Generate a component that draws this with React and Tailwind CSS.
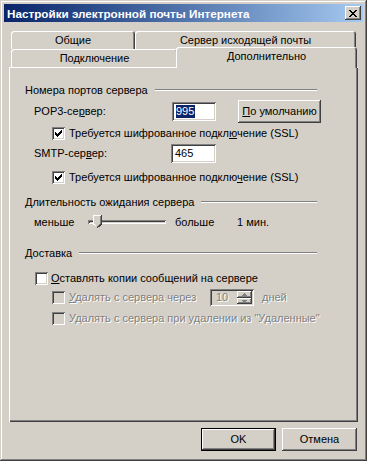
import React from "react";

const raised =
  "shadow-[inset_-1px_-1px_#404040,inset_1px_1px_#ffffff,inset_-2px_-2px_#808080,inset_2px_2px_#d4d0c8]";
const sunken =
  "shadow-[inset_1px_1px_#808080,inset_-1px_-1px_#ffffff,inset_2px_2px_#404040,inset_-2px_-2px_#d4d0c8]";
const dim = "text-[#808080] [text-shadow:1px_1px_0_#ffffff]";

const CheckMark = () => {
  const runs = [2, 3, 4, 3, 2, 1, 0];
  return (
    <svg width="7" height="7" viewBox="0 0 7 7" shapeRendering="crispEdges">
      {runs.map((y, x) => (
        <rect key={x} x={x} y={y} width="1" height="3" fill="#000" />
      ))}
    </svg>
  );
};

const Box = ({ checked, disabled }) => (
  <span
    className={`w-[13px] h-[13px] shrink-0 flex items-center justify-center ${sunken} ${
      disabled ? "bg-[#d4d0c8]" : "bg-white"
    }`}
  >
    {checked && <CheckMark />}
  </span>
);

const GroupTitle = ({ children, className = "" }) => (
  <div className={`h-[14px] w-[292px] flex items-center ${className}`}>
    <span className="whitespace-nowrap">{children}</span>
    <span className="flex-1 ml-[7px] h-[2px] border-t border-[#808080] border-b border-b-white" />
  </div>
);

const CloseGlyph = () => {
  const rows = [
    [0, 6],
    [1, 5],
    [2, 4],
    [3, 3],
    [2, 4],
    [1, 5],
    [0, 6],
  ];
  return (
    <svg width="8" height="7" viewBox="0 0 8 7" shapeRendering="crispEdges">
      {rows.map(([a, b], y) => (
        <g key={y}>
          <rect x={a} y={y} width="2" height="1" fill="#000" />
          <rect x={b} y={y} width="2" height="1" fill="#000" />
        </g>
      ))}
    </svg>
  );
};

const SpinArrow = ({ up }) => (
  <svg width="5" height="3" viewBox="0 0 5 3" shapeRendering="crispEdges">
    {up ? (
      <>
        <rect x="2" y="0" width="1" height="1" fill="#808080" />
        <rect x="1" y="1" width="3" height="1" fill="#808080" />
        <rect x="0" y="2" width="5" height="1" fill="#808080" />
      </>
    ) : (
      <>
        <rect x="0" y="0" width="5" height="1" fill="#808080" />
        <rect x="1" y="1" width="3" height="1" fill="#808080" />
        <rect x="2" y="2" width="1" height="1" fill="#808080" />
      </>
    )}
  </svg>
);

export default function App() {
  return (
    <div
      className="w-[367px] h-[461px] bg-[#d4d0c8] p-[4px] flex flex-col text-[11px] leading-[13px] text-black shadow-[inset_-1px_-1px_#404040,inset_1px_1px_#d4d0c8,inset_-2px_-2px_#808080,inset_2px_2px_#ffffff]"
      style={{ fontFamily: '"Liberation Sans", Arial, sans-serif' }}
    >
      {/* Title bar */}
      <div className="h-[18px] shrink-0 bg-gradient-to-r from-[#0a246a] to-[#a6caf0] flex items-center justify-between pl-[3px] pr-[2px]">
        <span className="text-white font-bold text-[11.7px] whitespace-nowrap">
          Настройки электронной почты Интернета
        </span>
        <span className={`w-[16px] h-[14px] bg-[#d4d0c8] flex items-center justify-center ${raised}`}>
          <CloseGlyph />
        </span>
      </div>

      <div className="flex-1 flex flex-col px-[5px]">
        {/* Tabs */}
        <div className="mt-[9px] ml-[2px] flex">
          <div className="w-[124px] h-[18px] pt-[1px] rounded-t-[3px] flex items-center justify-center shadow-[inset_1px_1px_#ffffff,inset_-1px_0_#404040,inset_-2px_0_#808080]">
            Общие
          </div>
          <div className="w-[221px] h-[18px] pt-[1px] rounded-t-[3px] flex items-center justify-center shadow-[inset_1px_1px_#ffffff,inset_-1px_0_#404040,inset_-2px_0_#808080]">
            Сервер исходящей почты
          </div>
        </div>
        <div className="ml-[2px] flex items-start h-[18px]">
          <div className="w-[167px] h-[18px] pt-[1px] rounded-t-[3px] bg-[#d4d0c8] flex items-center justify-center shadow-[inset_1px_1px_#ffffff,inset_-1px_0_#404040,inset_-2px_0_#808080]">
            Подключение
          </div>
          <div className="relative z-10 -mt-[2px] -ml-[2px] w-[181px] h-[21px] pb-[3px] rounded-t-[3px] bg-[#d4d0c8] flex items-center justify-center shadow-[inset_1px_1px_#ffffff,inset_-1px_0_#404040,inset_-2px_0_#808080]">
            Дополнительно
          </div>
        </div>

        {/* Tab page */}
        <div className="h-[355px] shrink-0 pl-[16px] flex flex-col shadow-[inset_1px_1px_#ffffff,inset_-1px_-1px_#404040,inset_-2px_-2px_#808080]">
          <GroupTitle className="mt-[16px]">Номера портов сервера</GroupTitle>

          <div className="mt-[3px] h-[23px] pl-[9px] flex items-center">
            <span className="w-[138px]">
              POP3-се<u>р</u>вер:
            </span>
            <span className={`w-[44px] h-[19px] bg-white flex items-center pl-[4px] ${sunken}`}>
              <span className="bg-[#0a246a] text-white leading-[13px] pr-[1px]">995</span>
            </span>
            <span className={`ml-[22px] w-[83px] h-[23px] flex items-center justify-center ${raised}`}>
              <span>
                <u>П</u>о умолчанию
              </span>
            </span>
          </div>

          <div className="mt-[4px] h-[13px] pl-[27px] flex items-center">
            <Box checked />
            <span className="ml-[4px] whitespace-nowrap">
              Требуется шифрованное подкл<u>ю</u>чение (SSL)
            </span>
          </div>

          <div className="mt-[4px] h-[19px] pl-[9px] flex items-center">
            <span className="w-[137px]">
              SMTP-сер<u>в</u>ер:
            </span>
            <span className={`w-[45px] h-[19px] bg-white flex items-center pl-[4px] ${sunken}`}>
              465
            </span>
          </div>

          <div className="mt-[8px] h-[13px] pl-[27px] flex items-center">
            <Box checked />
            <span className="ml-[4px] whitespace-nowrap">
              Требуется шифрованное подклю<u>ч</u>ение (SSL)
            </span>
          </div>

          <GroupTitle className="mt-[11px]">
            <u>Д</u>лительность ожидания сервера
          </GroupTitle>

          <div className="mt-[3px] h-[20px] pl-[9px] flex items-center">
            <span className="w-[54px]">меньше</span>
            <span className="relative w-[78px] h-[20px] flex items-center">
              <span className={`w-[78px] h-[4px] ${sunken}`} />
              <svg
                className="absolute left-[5px] top-[3px]"
                width="9"
                height="13"
                viewBox="0 0 9 13"
                shapeRendering="crispEdges"
              >
                <path d="M0 0 H8 V9 L4 12 L0 9 Z" fill="#d4d0c8" />
                <path d="M0.5 9 V0.5 H8" stroke="#ffffff" fill="none" />
                <path d="M8.5 0 V9.2 L4.5 12.7" stroke="#404040" fill="none" />
                <path d="M7.5 1 V8.8 L4.5 11.5" stroke="#808080" fill="none" />
                <path d="M0.5 9 L3.5 11.5" stroke="#ffffff" fill="none" />
              </svg>
            </span>
            <span className="ml-[9px] w-[62px]">больше</span>
            <span>1 мин.</span>
          </div>

          <GroupTitle className="mt-[14px]">Доставка</GroupTitle>

          <div className="mt-[12px] h-[13px] pl-[10px] flex items-center">
            <Box />
            <span className="ml-[3px] whitespace-nowrap">
              <u>О</u>ставлять копии сообщений на сервере
            </span>
          </div>

          <div className="mt-[4px] h-[17px] pl-[27px] flex items-center">
            <Box disabled />
            <span className={`ml-[4px] w-[141px] whitespace-nowrap ${dim}`}>
              <u>У</u>далять с сервера через
            </span>
            <span className={`w-[44px] h-[17px] bg-[#d4d0c8] flex items-center justify-between pl-[6px] pr-[2px] ${sunken}`}>
              <span className={dim}>10</span>
              <span className="flex flex-col">
                <span className={`w-[15px] h-[7px] flex items-center justify-center ${raised}`}>
                  <SpinArrow up />
                </span>
                <span className={`w-[15px] h-[6px] flex items-center justify-center ${raised}`}>
                  <SpinArrow />
                </span>
              </span>
            </span>
            <span className={`ml-[8px] ${dim}`}>дней</span>
          </div>

          <div className="mt-[6px] h-[13px] pl-[27px] flex items-center">
            <Box disabled />
            <span className={`ml-[4px] whitespace-nowrap ${dim}`}>
              У<u>д</u>алять с сервера при удалении из "Удаленные"
            </span>
          </div>
        </div>

        {/* Buttons */}
        <div className="mt-[6px] flex justify-end gap-[6px] pr-[1px]">
          <span className="w-[75px] h-[23px] border border-black flex">
            <span className={`flex-1 flex items-center justify-center ${raised}`}>OK</span>
          </span>
          <span className={`w-[75px] h-[23px] flex items-center justify-center ${raised}`}>
            Отмена
          </span>
        </div>
      </div>
    </div>
  );
}
